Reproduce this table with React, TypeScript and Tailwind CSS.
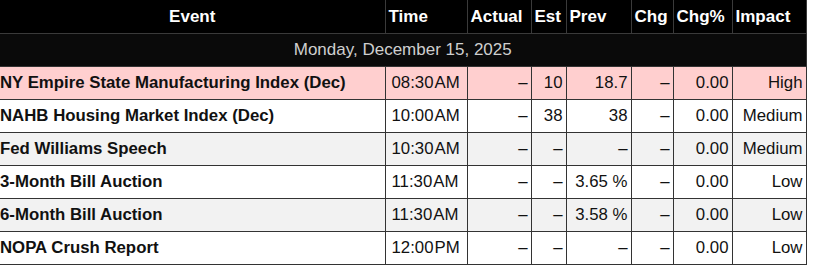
import React from "react";

type Row = {
  event: string;
  time: string;
  ampm: string;
  actual: string;
  est: string;
  prev: string;
  chg: string;
  chgPct: string;
  impact: string;
};

const rows: Row[] = [
  { event: "NY Empire State Manufacturing Index (Dec)", time: "08:30", ampm: "AM", actual: "–", est: "10", prev: "18.7", chg: "–", chgPct: "0.00", impact: "High" },
  { event: "NAHB Housing Market Index (Dec)", time: "10:00", ampm: "AM", actual: "–", est: "38", prev: "38", chg: "–", chgPct: "0.00", impact: "Medium" },
  { event: "Fed Williams Speech", time: "10:30", ampm: "AM", actual: "–", est: "–", prev: "–", chg: "–", chgPct: "0.00", impact: "Medium" },
  { event: "3-Month Bill Auction", time: "11:30", ampm: "AM", actual: "–", est: "–", prev: "3.65 %", chg: "–", chgPct: "0.00", impact: "Low" },
  { event: "6-Month Bill Auction", time: "11:30", ampm: "AM", actual: "–", est: "–", prev: "3.58 %", chg: "–", chgPct: "0.00", impact: "Low" },
  { event: "NOPA Crush Report", time: "12:00", ampm: "PM", actual: "–", est: "–", prev: "–", chg: "–", chgPct: "0.00", impact: "Low" },
];

const th = "border-r border-b border-[#3a3a3a] px-[3px] font-bold";
const td = "border-r border-b border-[#333] h-[33px]";
const num = `${td} pl-[4px] pr-[3px] text-right`;

export default function App() {
  return (
    <div className="bg-white w-[817px] h-[269px] overflow-hidden font-['Liberation_Sans',Arial,sans-serif] text-[17px]">
      <table className="table-fixed border-collapse w-[806px]">
        <colgroup>
          <col className="w-[385px]" />
          <col className="w-[82px]" />
          <col className="w-[64px]" />
          <col className="w-[35px]" />
          <col className="w-[65px]" />
          <col className="w-[42px]" />
          <col className="w-[59px]" />
          <col className="w-[74px]" />
        </colgroup>
        <thead>
          <tr className="bg-black text-white h-[33px]">
            <th className={`${th} text-center`}>Event</th>
            <th className={`${th} text-left`}>Time</th>
            <th className={`${th} text-left`}>Actual</th>
            <th className={`${th} text-left`}>Est</th>
            <th className={`${th} text-left`}>Prev</th>
            <th className={`${th} text-left`}>Chg</th>
            <th className={`${th} text-left`}>Chg%</th>
            <th className={`${th} text-left`}>Impact</th>
          </tr>
        </thead>
        <tbody className="text-[#111] text-[16.8px]">
          <tr className="bg-[#0a0a0a] h-[33px]">
            <td colSpan={8} className="border-r border-b border-[#333] text-center text-[#cfcfcf] text-[17px]">
              Monday, December 15, 2025
            </td>
          </tr>
          {rows.map((r, i) => {
            const bg = i === 0 ? "bg-[#ffcfcf]" : i % 2 === 0 ? "bg-[#f2f2f2]" : "bg-white";
            return (
              <tr key={r.event} className={bg}>
                <td className={`${td} pl-0 pr-[3px] font-bold`}>{r.event}</td>
                <td className={`${td} pl-[6px] pr-[3px]`}>
                  {r.time}
                  <span className="ml-[1px]">{r.ampm}</span>
                </td>
                <td className={num}>{r.actual}</td>
                <td className={num}>{r.est}</td>
                <td className={num}>{r.prev}</td>
                <td className={num}>{r.chg}</td>
                <td className={num}>{r.chgPct}</td>
                <td className={num}>{r.impact}</td>
              </tr>
            );
          })}
        </tbody>
      </table>
    </div>
  );
}
